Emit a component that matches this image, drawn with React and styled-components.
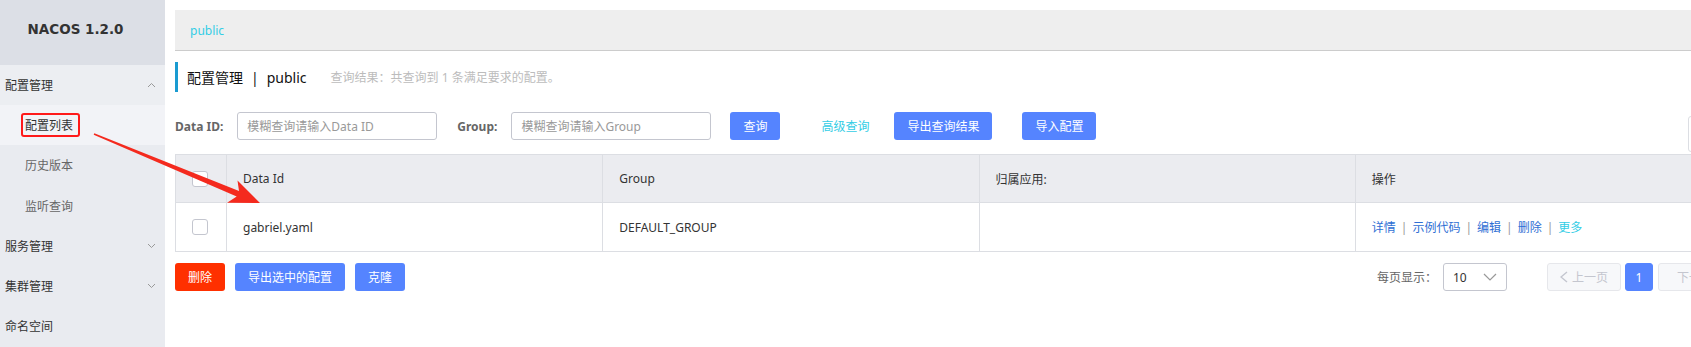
import React from "react"
import styled, { createGlobalStyle } from "styled-components"

const Global = createGlobalStyle`
body {
  margin: 0;
  overflow: hidden;
  background: #fff;
  font-family: "Noto Sans", "Noto Sans CJK SC", sans-serif;
  color: #333;
}
`

const Page = styled.div`
display: flex;
width: 1760px;
height: 347px;
position: relative;
`

const Sidebar = styled.aside`
width: 165px;
flex: none;
background: #e9ebf0;
`

const Logo = styled.div`
height: 65px;
background: #dcdfe6;
display: flex;
align-items: center;
justify-content: center;
padding-right: 14px;
padding-bottom: 8px;
box-sizing: border-box;
font-family: "DejaVu Sans", "Liberation Sans", sans-serif;
font-weight: bold;
font-size: 13.5px;
color: #333;
`

const MenuRow = styled.div`
height: 40.2px;
display: flex;
align-items: center;
justify-content: space-between;
padding: 0 9px 0 ${p => (p.$sub ? 25 : 5)}px;
font-size: 12px;
color: ${p => (p.$sub ? "#666" : "#333")};
background: ${p => (p.$active ? "#f2f3f7" : p.$open ? "#eceef2" : "transparent")};
`

const Marked = styled.span`
border: ${p => (p.$marked ? "2px solid #ff1a1a" : "2px solid transparent")};
border-radius: 3px;
padding: 1px 5px 1px 2px;
margin-left: -4px;
color: #333;
`

const Caret = ({ up }) => (
  <svg width="9" height="6" viewBox="0 0 9 6">
    <polyline
      points={up ? "1,5 4.5,1.5 8,5" : "1,1 4.5,4.5 8,1"}
      fill="none"
      stroke="#999"
      strokeWidth="1"
    />
  </svg>
)

const Main = styled.main`
width: 1557px;
flex: none;
margin-left: 10px;
padding-top: 10px;
`

const Breadcrumb = styled.div`
height: 40px;
background: #eeeeee;
border-bottom: 1px solid #cccccc;
display: flex;
align-items: center;
padding-left: 15px;
font-size: 12px;
color: #33cde5;
`

const TitleBar = styled.div`
margin-top: 11px;
height: 30px;
border-left: 3px solid #1a9bd1;
display: flex;
align-items: center;
padding-left: 9px;
font-size: 14px;
color: #111;
`

const Sep = styled.span`
margin: 0 8px;
`

const Hint = styled.span`
margin-left: 24px;
font-size: 12px;
color: #bcbcbc;
`

const SearchRow = styled.div`
margin-top: 20px;
height: 28px;
display: flex;
align-items: center;
`

const Label = styled.label`
font-weight: bold;
font-size: 12px;
color: #666;
margin-right: 14px;
margin-left: ${p => p.$ml || 0}px;
`

const Input = styled.input`
width: 200px;
height: 28px;
box-sizing: border-box;
border: 1px solid #c4c6cf;
border-radius: 3px;
padding: 0 9px;
font-family: inherit;
font-size: 12px;
outline: none;
&::placeholder {
  color: #999;
}
`

const Button = styled.button`
height: 28px;
border: none;
border-radius: 3px;
padding: 0 13px;
margin-left: ${p => p.$ml || 0}px;
background: ${p => (p.$danger ? "#ff3000" : "#5584ff")};
color: #fff;
font-family: inherit;
font-size: 12px;
cursor: pointer;
`

const LinkText = styled.span`
margin-left: ${p => p.$ml || 0}px;
font-size: 12px;
color: #33cde5;
`

const EdgeBox = styled.div`
margin-left: auto;
align-self: flex-start;
margin-top: 4px;
width: 44px;
height: 36px;
box-sizing: border-box;
border: 1px solid #dcdee3;
border-radius: 3px;
`

const Table = styled.table`
margin-top: 14px;
width: 100%;
border-collapse: collapse;
table-layout: fixed;
font-size: 12px;
`

const Th = styled.th`
box-sizing: border-box;
height: 48px;
background: #ebecf0;
border: 1px solid #dcdee3;
text-align: left;
font-weight: normal;
color: #333;
padding: 0 16px;
width: ${p => p.$w || "auto"};
`

const Td = styled.td`
height: 48px;
border: 1px solid #dcdee3;
padding: 0 16px;
color: #333;
`

const Check = styled.span`
display: block;
width: 16px;
height: 16px;
box-sizing: border-box;
border: 1px solid #c4c6cf;
border-radius: 3px;
background: #fff;
`

const Op = styled.span`
color: ${p => (p.$more ? "#33cde5" : "#2f6fd4")};
`

const OpSep = styled.span`
margin: 0 5px;
color: #999;
`

const Footer = styled.div`
margin-top: 11px;
display: flex;
align-items: center;
justify-content: space-between;
`

const Group = styled.div`
display: flex;
align-items: center;
`

const PageLabel = styled.span`
font-size: 12px;
color: #666;
margin-right: 6px;
`

const Select = styled.div`
width: 64px;
height: 28px;
box-sizing: border-box;
border: 1px solid #c4c6cf;
border-radius: 3px;
display: flex;
align-items: center;
justify-content: space-between;
padding: 0 9px 0 9px;
font-size: 12px;
color: #333;
margin-right: 40px;
`

const PageBtn = styled.div`
height: 28px;
box-sizing: border-box;
display: flex;
align-items: center;
justify-content: center;
gap: 4px;
width: ${p => (p.$current ? 28 : 74)}px;
margin-left: ${p => p.$ml || 0}px;
border-radius: 3px;
border: 1px solid ${p => (p.$current ? "#5584ff" : "#e6e7eb")};
background: ${p => (p.$current ? "#5584ff" : "#f7f8fa")};
color: ${p => (p.$current ? "#fff" : "#c4c6cf")};
font-size: 12px;
`

const Overlay = styled.svg`
position: absolute;
left: 0;
top: 0;
pointer-events: none;
`

export default function App() {
  return (
    <Page>
      <Global />
      <Sidebar>
        <Logo>NACOS 1.2.0</Logo>
        <MenuRow $open>
          配置管理 <Caret up />
        </MenuRow>
        <MenuRow $sub $active>
          <Marked $marked>配置列表</Marked>
        </MenuRow>
        <MenuRow $sub>历史版本</MenuRow>
        <MenuRow $sub>监听查询</MenuRow>
        <MenuRow>
          服务管理 <Caret />
        </MenuRow>
        <MenuRow>
          集群管理 <Caret />
        </MenuRow>
        <MenuRow>命名空间</MenuRow>
      </Sidebar>
      <Main>
        <Breadcrumb>public</Breadcrumb>
        <TitleBar>
          配置管理<Sep>|</Sep>public
          <Hint>查询结果：共查询到 1 条满足要求的配置。</Hint>
        </TitleBar>
        <SearchRow>
          <Label>Data ID:</Label>
          <Input placeholder="模糊查询请输入Data ID" />
          <Label $ml={20}>Group:</Label>
          <Input placeholder="模糊查询请输入Group" />
          <Button $ml={19}>查询</Button>
          <LinkText $ml={41}>高级查询</LinkText>
          <Button $ml={25}>导出查询结果</Button>
          <Button $ml={30}>导入配置</Button>
          <EdgeBox />
        </SearchRow>
        <Table>
          <thead>
            <tr>
              <Th $w="51px">
                <Check />
              </Th>
              <Th>Data Id</Th>
              <Th>Group</Th>
              <Th>归属应用:</Th>
              <Th>操作</Th>
            </tr>
          </thead>
          <tbody>
            <tr>
              <Td>
                <Check />
              </Td>
              <Td>gabriel.yaml</Td>
              <Td>DEFAULT_GROUP</Td>
              <Td></Td>
              <Td>
                <Op>详情</Op>
                <OpSep>|</OpSep>
                <Op>示例代码</Op>
                <OpSep>|</OpSep>
                <Op>编辑</Op>
                <OpSep>|</OpSep>
                <Op>删除</Op>
                <OpSep>|</OpSep>
                <Op $more>更多</Op>
              </Td>
            </tr>
          </tbody>
        </Table>
        <Footer>
          <Group>
            <Button $danger>删除</Button>
            <Button $ml={10}>导出选中的配置</Button>
            <Button $ml={10}>克隆</Button>
          </Group>
          <Group>
            <PageLabel>每页显示：</PageLabel>
            <Select>
              10
              <svg width="14" height="8" viewBox="0 0 14 8">
                <polyline points="1,1 7,7 13,1" fill="none" stroke="#999" strokeWidth="1.2" />
              </svg>
            </Select>
            <PageBtn>
              <svg width="8" height="12" viewBox="0 0 8 12">
                <polyline points="7,1 1,6 7,11" fill="none" stroke="#c4c6cf" strokeWidth="1.4" />
              </svg>
              上一页
            </PageBtn>
            <PageBtn $current $ml={4}>1</PageBtn>
            <PageBtn $ml={5}>下一页</PageBtn>
          </Group>
        </Footer>
      </Main>
      <Overlay width="300" height="230" viewBox="0 0 300 230">
        <polygon
          points="93.7,134.7 236.7,196.6 227.1,202.7 260,203 237.5,180.4 239,191 94.3,133.3"
          fill="#f42a1e"
        />
      </Overlay>
    </Page>
  )
}
